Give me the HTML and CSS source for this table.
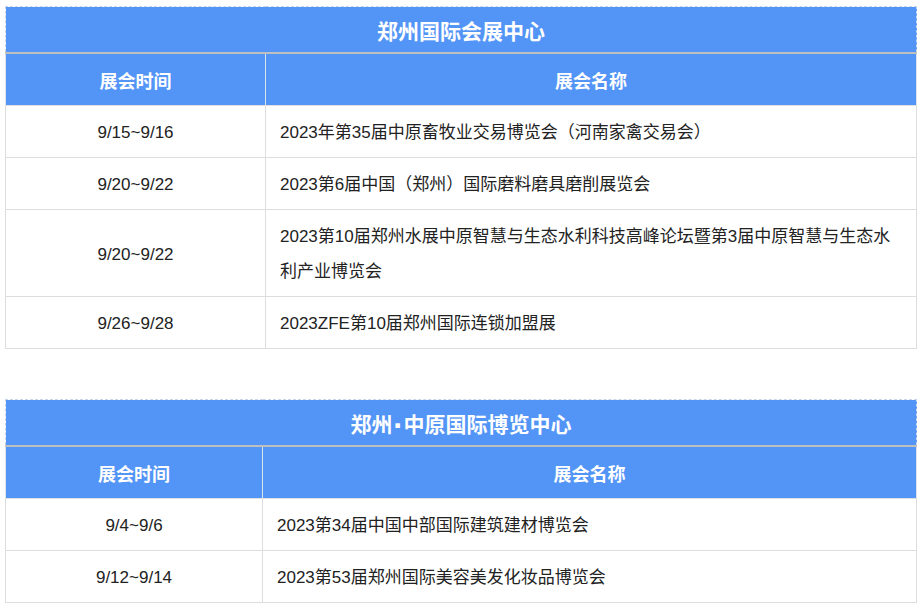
FILE: index.html
```html
<!DOCTYPE html>
<html lang="zh-CN">
<head>
<meta charset="utf-8">
<title>展会</title>
<link rel="stylesheet" href="styles.css">
</head>
<body>
<div class="page">
  <table class="expo expo-a">
    <colgroup><col class="c-date"><col></colgroup>
    <thead>
      <tr><th class="title" colspan="2">郑州国际会展中心</th></tr>
      <tr class="head"><th>展会时间</th><th>展会名称</th></tr>
    </thead>
    <tbody>
      <tr><td class="date">9/15~9/16</td><td class="name">2023年第35届中原畜牧业交易博览会（河南家禽交易会）</td></tr>
      <tr><td class="date">9/20~9/22</td><td class="name">2023第6届中国（郑州）国际磨料磨具磨削展览会</td></tr>
      <tr><td class="date">9/20~9/22</td><td class="name">2023第10届郑州水展中原智慧与生态水利科技高峰论坛暨第3届中原智慧与生态水利产业博览会</td></tr>
      <tr><td class="date">9/26~9/28</td><td class="name">2023ZFE第10届郑州国际连锁加盟展</td></tr>
    </tbody>
  </table>

  <table class="expo expo-b">
    <colgroup><col class="c-date"><col></colgroup>
    <thead>
      <tr><th class="title" colspan="2">郑州<span class="dot">·</span>中原国际博览中心</th></tr>
      <tr class="head"><th>展会时间</th><th>展会名称</th></tr>
    </thead>
    <tbody>
      <tr><td class="date">9/4~9/6</td><td class="name">2023第34届中国中部国际建筑建材博览会</td></tr>
      <tr><td class="date">9/12~9/14</td><td class="name">2023第53届郑州国际美容美发化妆品博览会</td></tr>
    </tbody>
  </table>
</div>
</body>
</html>
```

FILE: styles.css
```css
html, body {
  margin: 0;
  padding: 0;
  background: #ffffff;
}

.page {
  padding: 6px 6px 0 5px;
  font-family: "Liberation Sans", "Noto Sans CJK SC", sans-serif;
  color: #222222;
}

.expo {
  width: 912px;
  border-collapse: collapse;
  table-layout: fixed;
}

.expo-a .c-date { width: 260px; }
.expo-b .c-date { width: 257px; }

.expo-b { margin-top: 50px; }

.title {
  background: #5394f7;
  color: #ffffff;
  font-size: 21px;
  font-weight: bold;
  height: 45px;
  padding: 0;
  border: 1px dashed #c9d6ea;
  border-bottom: 2px solid #bfbfbf;
  font-family: "Noto Sans CJK SC", sans-serif;
}

.title .dot {
  display: inline-block;
  font-family: "Liberation Sans", sans-serif;
  transform: scale(1.5);
  margin: 0 2px;
}

.head th {
  background: #5394f7;
  color: #ffffff;
  font-size: 18px;
  font-weight: bold;
  height: 51px;
  padding: 0;
  border-left: 1px solid #dde3ec;
  border-right: 1px solid #dde3ec;
  border-bottom: 1px solid #e0e0e0;
  font-family: "Noto Sans CJK SC", sans-serif;
}

.expo td {
  border: 1px solid #dddddd;
  font-size: 17px;
  line-height: 35px;
  padding: 9px 14px 7px;
  vertical-align: middle;
}

.date { text-align: center; }
.name { text-align: left; }
```
